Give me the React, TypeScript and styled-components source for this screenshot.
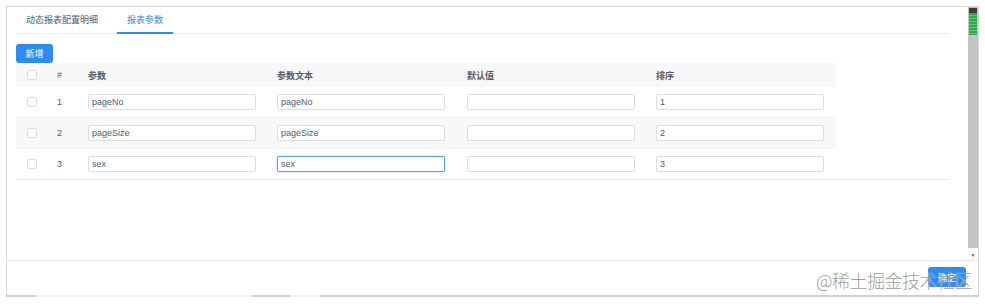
import styled, { createGlobalStyle } from "styled-components";

const GlobalStyle = createGlobalStyle`
  body {
    margin: 0;
    background: #fff;
    font-family: "Liberation Sans", "Noto Sans CJK SC", sans-serif;
  }
`;

const Frame = styled.div`
  position: relative;
  margin: 6px 0 0 6px;
  width: 971px;
  border: 1px solid #d6d6d6;
  border-bottom: none;
  display: flex;
  flex-direction: column;
`;

const Body = styled.div`
  height: 253px;
  display: flex;
`;

const Content = styled.div`
  width: 942px;
  padding: 0 9px;
`;

const Tabs = styled.div`
  display: flex;
  height: 26px;
  border-bottom: 1px solid #e8eaec;
`;

const Tab = styled.div<{ active?: boolean }>`
  display: flex;
  align-items: center;
  padding: 0 10px;
  margin-right: 9px;
  font-family: "Noto Sans CJK SC", sans-serif;
  font-size: 9px;
  color: ${({ active }) => (active ? "#2d8cf0" : "#515a6e")};
  border-bottom: 2px solid ${({ active }) => (active ? "#2d8cf0" : "transparent")};
  margin-bottom: -1px;
`;

const AddButton = styled.button`
  margin-top: 10px;
  width: 37px;
  height: 19px;
  border: none;
  border-radius: 3px;
  background: #2d8cf0;
  color: #fff;
  font-family: "Noto Sans CJK SC", sans-serif;
  font-size: 9px;
  padding: 0;
  display: block;
`;

const TableWrap = styled.div`
  border-bottom: 1px solid #ebebeb;
`;

const Row = styled.div<{ head?: boolean; striped?: boolean }>`
  width: 820px;
  height: ${({ head }) => (head ? "24px" : "30px")};
  display: grid;
  grid-template-columns: 31px 41px 189px 190px 189px 180px;
  align-items: center;
  background: ${({ head, striped }) => (head || striped ? "#f8f8f9" : "#fff")};
  border-bottom: ${({ head }) => (head ? "none" : "1px solid #f4f4f4")};
  &:last-child {
    border-bottom: none;
  }
`;

const HeadCell = styled.div`
  font-family: "Noto Sans CJK SC", sans-serif;
  font-size: 9px;
  font-weight: 700;
  color: #515a6e;
`;

const IndexCell = styled.div`
  font-size: 9px;
  color: #515a6e;
  padding-left: 10px;
`;

const CheckCell = styled.div`
  padding-left: 11px;
  display: flex;
`;

const Check = styled.span`
  width: 10px;
  height: 10px;
  box-sizing: border-box;
  border: 1px solid #dcdee2;
  border-radius: 2px;
  background: #fff;
`;

const Field = styled.input<{ focused?: boolean }>`
  width: 168px;
  height: 16px;
  box-sizing: border-box;
  border: 1px solid ${({ focused }) => (focused ? "#57a3f3" : "#dcdee2")};
  box-shadow: ${({ focused }) => (focused ? "0 0 0 1px rgba(45,140,240,.15)" : "none")};
  border-radius: 2px;
  padding: 0 3px;
  font-family: "Liberation Sans", sans-serif;
  font-size: 9px;
  color: #515a6e;
  outline: none;
  display: block;
`;

const VScroll = styled.div`
  width: 10px;
  margin-left: 9px;
  display: flex;
  flex-direction: column;
`;

const VTrack = styled.div`
  height: 240px;
  background: #c4c4c4;
  padding-top: 1px;
`;

const Thumb = styled.div`
  margin: 0 1px;
  height: 27px;
  border-top: 5px solid #3c3c3c;
  box-sizing: border-box;
  background: repeating-linear-gradient(#2fa84f 0 2px, #58c878 2px 3px);
`;

const Arrow = styled.div`
  flex: 1;
  display: flex;
  justify-content: center;
  padding-top: 4px;
  font-size: 5px;
  color: #555;
`;

const Footer = styled.div`
  height: 35px;
  border-top: 1px solid #e8eaec;
  display: flex;
  justify-content: flex-end;
  align-items: flex-start;
  padding: 6px 12px 0 0;
  box-sizing: border-box;
`;

const OkButton = styled.button`
  width: 38px;
  height: 20px;
  border: none;
  border-radius: 3px;
  background: #2d8cf0;
  color: #fff;
  font-family: "Noto Sans CJK SC", sans-serif;
  font-size: 9px;
  padding: 0;
`;

const HScroll = styled.div`
  height: 2px;
  background: #cfcfcf;
  display: flex;
  margin-left: -1px;
  margin-right: -1px;
`;

const HThumb = styled.div<{ from: number; width: number }>`
  margin-left: ${({ from }) => from}px;
  width: ${({ width }) => width}px;
  background: #f2f2f2;
`;

const Watermark = styled.div`
  position: absolute;
  right: 6px;
  bottom: 4px;
  font-family: "Noto Sans CJK SC", sans-serif;
  font-size: 18px;
  font-weight: 300;
  letter-spacing: -0.5px;
  color: rgba(110, 110, 110, 0.7);
  text-shadow: 0 0 1px #fff;
`;

const rows = [
  { param: "pageNo", text: "pageNo", def: "", sort: "1" },
  { param: "pageSize", text: "pageSize", def: "", sort: "2" },
  { param: "sex", text: "sex", def: "", sort: "3" },
];

export default function App() {
  return (
    <>
      <GlobalStyle />
      <Frame>
        <Body>
          <Content>
            <Tabs>
              <Tab>动态报表配置明细</Tab>
              <Tab active>报表参数</Tab>
            </Tabs>
            <AddButton>新增</AddButton>
            <TableWrap>
              <Row head>
                <CheckCell>
                  <Check />
                </CheckCell>
                <IndexCell>#</IndexCell>
                <HeadCell>参数</HeadCell>
                <HeadCell>参数文本</HeadCell>
                <HeadCell>默认值</HeadCell>
                <HeadCell>排序</HeadCell>
              </Row>
              {rows.map((r, i) => (
                <Row key={r.param} striped={i === 1}>
                  <CheckCell>
                    <Check />
                  </CheckCell>
                  <IndexCell>{i + 1}</IndexCell>
                  <Field defaultValue={r.param} />
                  <Field defaultValue={r.text} focused={i === 2} />
                  <Field defaultValue={r.def} />
                  <Field defaultValue={r.sort} />
                </Row>
              ))}
            </TableWrap>
          </Content>
          <VScroll>
            <VTrack>
              <Thumb />
            </VTrack>
            <Arrow>▼</Arrow>
          </VScroll>
        </Body>
        <Footer>
          <OkButton>确定</OkButton>
        </Footer>
        <HScroll>
          <HThumb from={30} width={217} />
          <HThumb from={37} width={30} />
        </HScroll>
        <Watermark>@稀土掘金技术社区</Watermark>
      </Frame>
    </>
  );
}
